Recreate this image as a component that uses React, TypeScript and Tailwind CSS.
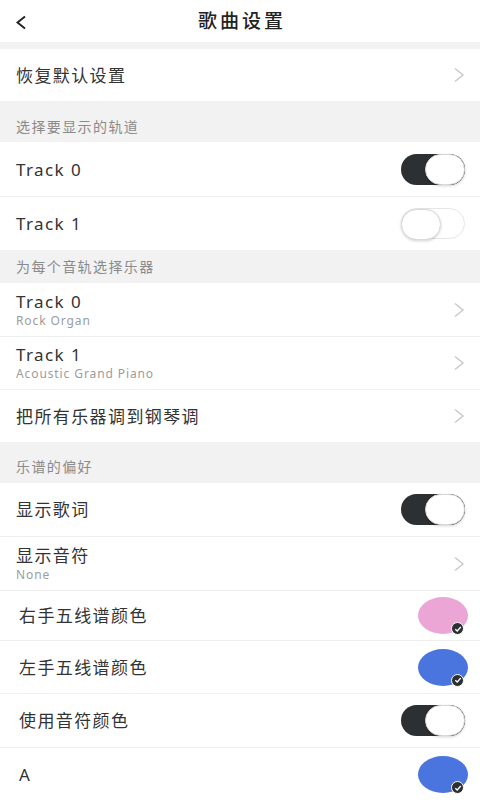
import type { ReactNode } from "react";

const FONT = { fontFamily: '"Noto Sans", "Noto Sans CJK SC", sans-serif' };

function Chevron() {
  return (
    <svg width="12" height="16" viewBox="0 0 12 16" className="mr-[15px]">
      <polyline
        points="2,1.5 10,8 2,14.5"
        fill="none"
        stroke="#c8c8c8"
        strokeWidth="1.4"
      />
    </svg>
  );
}

function Toggle({ on }: { on: boolean }) {
  return (
    <div
      className={`relative w-[64px] h-[31px] rounded-full mr-[15px] ${
        on ? "bg-[#2d3033]" : "bg-white border border-[#e6e6e6]"
      }`}
    >
      <div
        className={`absolute top-0 h-[31px] w-[40px] rounded-full bg-white border border-[#d8d8d8] shadow-[0_1px_3px_rgba(0,0,0,0.18)] ${
          on ? "right-0" : "-left-px -top-px"
        }`}
      />
    </div>
  );
}

function Swatch({ color }: { color: string }) {
  return (
    <div className="relative w-[50px] h-[37px] mr-[12px]">
      <div className={`w-full h-full rounded-[50%] ${color}`} />
      <div className="absolute right-[4px] -bottom-[1px] w-[13px] h-[13px] rounded-full bg-[#2d3033] border border-white flex items-center justify-center">
        <svg width="8" height="8" viewBox="0 0 8 8">
          <polyline
            points="1.3,4.2 3.2,6 6.8,2"
            fill="none"
            stroke="white"
            strokeWidth="1.3"
          />
        </svg>
      </div>
    </div>
  );
}

function Row({
  label,
  sub,
  right,
  h,
  indent = "pl-4",
  line = true,
}: {
  label: string;
  sub?: string;
  right?: ReactNode;
  h: string;
  indent?: string;
  line?: boolean;
}) {
  return (
    <div className={`bg-white flex items-center justify-between ${h} ${line ? "border-b border-[#efefef]" : ""}`}>
      <div className={`${indent} flex flex-col`}>
        <span className="text-[17px] tracking-[1.4px] text-[#333] leading-[19px]">{label}</span>
        {sub && <span className="mt-[3px] text-[12px] tracking-[0.9px] text-[#9c9c9c] leading-[14px]">{sub}</span>}
      </div>
      {right}
    </div>
  );
}

function Section({ title, h, pt }: { title: string; h: string; pt: string }) {
  return (
    <div className={`bg-[#f2f2f2] ${h} ${pt} pl-4 text-[14px] tracking-[1.4px] text-[#8a8a8a]`}>
      {title}
    </div>
  );
}

export default function App() {
  return (
    <div className="w-[480px] h-[800px] overflow-hidden bg-[#f2f2f2]" style={FONT}>
      <div className="bg-white h-[42px] flex items-center relative">
        <svg width="14" height="16" viewBox="0 0 14 16" className="absolute left-[15px] top-[15px]">
          <polyline points="10,1.5 2.5,7.5 10,13.5" fill="none" stroke="#222" strokeWidth="1.9" />
        </svg>
        <div className="w-full text-center pl-[4px] text-[19px] tracking-[3px] font-medium text-[#222]">歌曲设置</div>
      </div>
      <div className="h-[7px]" />
      <Row label="恢复默认设置" h="h-[52px]" right={<Chevron />} line={false} />
      <Section title="选择要显示的轨道" h="h-[41px]" pt="pt-[15px]" />
      <Row label="Track 0" h="h-[55px]" right={<Toggle on />} />
      <Row label="Track 1" h="h-[53px]" right={<Toggle on={false} />} line={false} />
      <Section title="为每个音轨选择乐器" h="h-[33px]" pt="pt-[6px]" />
      <Row label="Track 0" sub="Rock Organ" h="h-[54px]" right={<Chevron />} />
      <Row label="Track 1" sub="Acoustic Grand Piano" h="h-[53px]" right={<Chevron />} />
      <Row label="把所有乐器调到钢琴调" h="h-[52px]" right={<Chevron />} line={false} />
      <Section title="乐谱的偏好" h="h-[41px]" pt="pt-[14px]" />
      <Row label="显示歌词" h="h-[54px]" right={<Toggle on />} />
      <Row label="显示音符" sub="None" h="h-[54px]" right={<Chevron />} />
      <Row label="右手五线谱颜色" indent="pl-[19px]" h="h-[50px]" right={<Swatch color="bg-[#eba6d5]" />} />
      <Row label="左手五线谱颜色" indent="pl-[19px]" h="h-[53px]" right={<Swatch color="bg-[#4a74de]" />} />
      <Row label="使用音符颜色" indent="pl-[19px]" h="h-[54px]" right={<Toggle on />} />
      <Row label="A" indent="pl-[19px]" h="h-[53px]" right={<Swatch color="bg-[#4a74de]" />} line={false} />
    </div>
  );
}
